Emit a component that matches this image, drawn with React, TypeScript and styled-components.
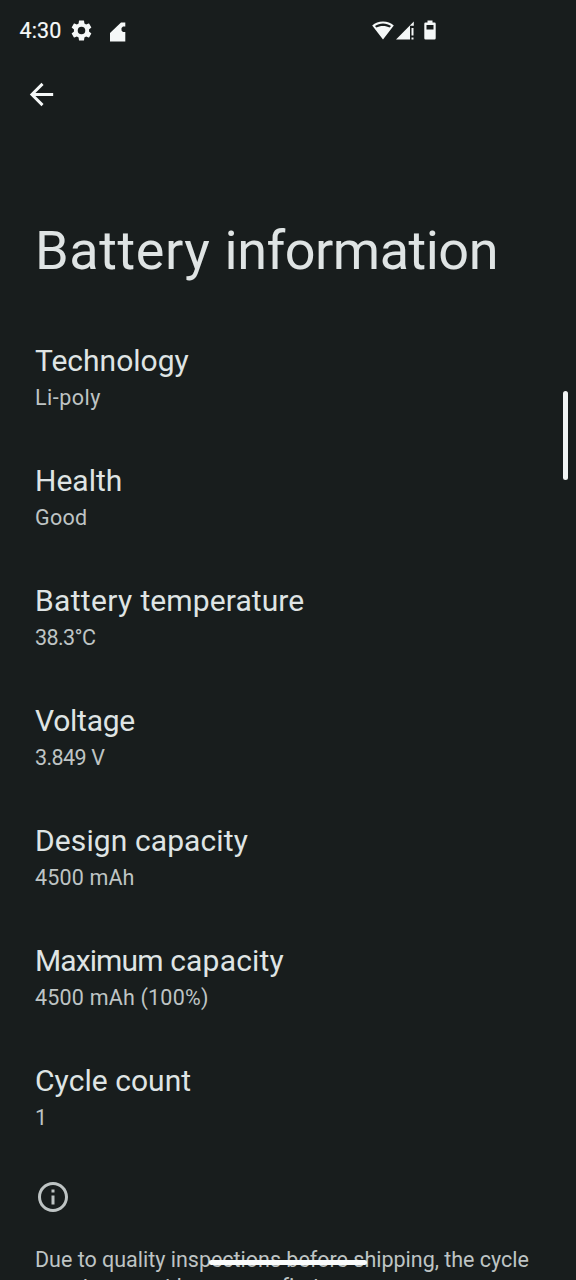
import React from "react";
import styled, { createGlobalStyle } from "styled-components";

const Global = createGlobalStyle`
  html, body { margin: 0; height: 1280px; overflow: hidden; background: #181d1d; }
  body { font-family: Roboto, "Open Sans", sans-serif; }
  * { box-sizing: border-box; }
`;

const Screen = styled.div`
  position: relative;
  display: flex;
  flex-direction: column;
  width: 576px;
  height: 1280px;
  overflow: hidden;
  background: #181d1d;
`;

const StatusBar = styled.header`
  display: flex;
  align-items: center;
  flex: none;
  height: 60px;
  padding: 0 140px 0 19.5px;
  color: #f5f8f8;
`;

const Clock = styled.span`
  width: 51.5px;
  padding-top: 1px;
  font-size: 21.5px;
  line-height: 28px;
  letter-spacing: 0.1px;
  -webkit-text-stroke: 0.2px currentColor;
  white-space: nowrap;
`;

const StatusIcons = styled.div`
  display: flex;
  align-items: center;
  margin-left: auto;
`;

const Toolbar = styled.nav`
  display: flex;
  align-items: center;
  flex: none;
  height: 69px;
  padding-left: 23.5px;
`;

const BackButton = styled.button`
  display: flex;
  padding: 0;
  border: 0;
  background: none;
  color: #f5f8f8;
`;

const Title = styled.h1`
  flex: none;
  margin: 89px 0 0 35px;
  font-size: 54px;
  line-height: 66px;
  font-weight: 400;
  white-space: nowrap;
  color: #dfe4e4;
`;

const List = styled.main`
  flex: none;
  margin-top: 46px;
  padding-left: 35px;
`;

const Row = styled.section`
  height: 120px;
  padding-top: 12px;
`;

const Label = styled.h2`
  margin: 0;
  font-size: 30px;
  line-height: 38px;
  font-weight: 400;
  white-space: nowrap;
  color: #dfe4e4;
`;

const Value = styled.p`
  margin: 4px 0 0;
  font-size: 21.5px;
  line-height: 28px;
  white-space: nowrap;
  color: #bec4c4;
`;

const Track = styled.span<{ $by: number }>`
  letter-spacing: ${(p) => p.$by}px;
`;

const Footer = styled.footer`
  flex: none;
  padding: 9px 0 0 35px;
  color: #bec4c4;
`;

const Note = styled.p`
  width: 510px;
  margin: 31px 0 0;
  font-size: 21.5px;
  line-height: 27px;
  letter-spacing: -0.01px;
`;

const ScrollThumb = styled.div`
  position: absolute;
  top: 391px;
  right: 8px;
  width: 5px;
  height: 89px;
  border-radius: 3px;
  background: #f0f3f3;
`;

const HomeIndicator = styled.div`
  position: absolute;
  bottom: 15px;
  left: 209px;
  width: 158px;
  height: 5px;
  border-radius: 3px;
  background: #fafcfc;
`;

type Run = [text: string, tracking: number];

const rows: { label: Run[]; value: Run[] }[] = [
  { label: [["Technology", 0]], value: [["Li-poly", 0.5]] },
  { label: [["Health", 0]], value: [["Good", 0.25]] },
  { label: [["Battery ", 0.35], ["temperature", 0.1]], value: [["38.3°C", -0.6]] },
  { label: [["Voltage", -0.25]], value: [["3.849", -0.6], [" V", 0]] },
  { label: [["Design capacity", 0.1]], value: [["4500 mAh", 0.15]] },
  { label: [["Maximum", -0.9], [" capacity", 0.2]], value: [["4500 mAh (100%)", 0.2]] },
  { label: [["Cycle count", 0.05]], value: [["1", 0]] },
];

const renderRuns = (runs: Run[]) =>
  runs.map(([text, tracking]) => (
    <Track key={text} $by={tracking}>{text}</Track>
  ));

const GearIcon = () => (
  <svg width="21" height="21" viewBox="2 2 20 20" fill="currentColor">
    <path d="M19.14 12.94c.04-.3.06-.61.06-.94 0-.32-.02-.64-.07-.94l2.03-1.58a.49.49 0 0 0 .12-.61l-1.92-3.32a.488.488 0 0 0-.59-.22l-2.39.96c-.5-.38-1.03-.7-1.62-.94l-.36-2.54a.484.484 0 0 0-.48-.41h-3.84c-.24 0-.43.17-.47.41l-.36 2.54c-.59.24-1.13.57-1.62.94l-2.39-.96c-.22-.08-.47 0-.59.22L2.74 8.87c-.12.21-.08.47.12.61l2.03 1.58c-.05.3-.09.63-.09.94s.02.64.07.94l-2.03 1.58a.49.49 0 0 0-.12.61l1.92 3.32c.12.22.37.29.59.22l2.39-.96c.5.38 1.03.7 1.62.94l.36 2.54c.05.24.24.41.48.41h3.84c.24 0 .44-.17.47-.41l.36-2.54c.59-.24 1.13-.56 1.62-.94l2.39.96c.22.08.47 0 .59-.22l1.92-3.32c.12-.22.07-.47-.12-.61l-2.01-1.58zM12 15.6A3.6 3.6 0 1 1 12 8.4a3.6 3.6 0 0 1 0 7.2z" />
  </svg>
);

const NotchedSvg = styled.svg`
  margin: 4px 0 0 18px;
`;

const NotchedIcon = () => (
  <NotchedSvg width="16" height="20" viewBox="0 0 16 20" fill="currentColor">
    <path d="M0 19.500V11L11 0.500H15.300V4.500H13L11.500 6V8.500L13 10H15.300V19.500Z" />
  </NotchedSvg>
);

const WifiIcon = () => (
  <svg width="22" height="19" viewBox="0 0 22 19" fill="currentColor">
    <path fillRule="evenodd" d="M11 0.5C6.8 0.5 3 2 0.2 4.6L11 18.5L21.8 4.6C19 2 15.200 0.500 11 0.500ZM4.300 6.600L3 4.900C5.300 3.300 8 2.400 11 2.400S16.700 3.300 19 4.900L17.700 6.600C15.800 5.500 13.500 4.900 11 4.900S6.200 5.500 4.300 6.600Z" />
  </svg>
);

const SignalSvg = styled.svg`
  margin-left: 2px;
`;

const SignalIcon = () => (
  <SignalSvg width="19" height="19" viewBox="0 0 19 19" fill="currentColor">
    <path d="M0 18.500L17.800 0.500V4.700H14V18.500Z" />
    <path d="M15.500 7H17.500V14.500H15.500ZM15.500 16.500H17.500V18.500H15.500Z" />
  </SignalSvg>
);

const BatterySvg = styled.svg`
  margin-left: 9.5px;
`;

const BatteryIcon = () => (
  <BatterySvg width="12" height="20" viewBox="0 0 12 20" fill="currentColor">
    <path fillRule="evenodd" d="M3.500 0.500H8.500V2.500H10.500Q11.700 2.500 11.700 3.700V18.300Q11.700 19.500 10.500 19.500H1.500Q0.300 19.500 0.300 18.300V3.700Q0.300 2.500 1.500 2.500H3.500ZM2.500 5V9.500H9.500V5Z" />
  </BatterySvg>
);

const InfoSvg = styled.svg`
  display: block;
`;

const App = () => (
  <>
    <Global />
    <Screen>
      <StatusBar>
        <Clock>4:30</Clock>
        <GearIcon />
        <NotchedIcon />
        <StatusIcons>
          <WifiIcon />
          <SignalIcon />
          <BatteryIcon />
        </StatusIcons>
      </StatusBar>
      <Toolbar>
        <BackButton aria-label="Back">
          <svg width="35" height="35" viewBox="0 0 24 24" fill="currentColor">
            <path d="M20 11H7.830L13.420 5.410L12 4L4 12L12 20L13.410 18.590L7.830 13H20Z" />
          </svg>
        </BackButton>
      </Toolbar>
      <Title>
        <Track $by={0.6}>Battery </Track>
        <Track $by={-0.5}>information</Track>
      </Title>
      <List>
        {rows.map(({ label, value }) => (
          <Row key={label[0][0]}>
            <Label>{renderRuns(label)}</Label>
            <Value>{renderRuns(value)}</Value>
          </Row>
        ))}
      </List>
      <Footer>
        <InfoSvg width="36" height="36" viewBox="0 0 24 24" fill="currentColor">
          <path d="M11 7h2v2h-2zm0 4h2v6h-2zm1-9C6.480 2 2 6.480 2 12s4.480 10 10 10 10-4.480 10-10S17.520 2 12 2zm0 18c-4.410 0-8-3.590-8-8s3.590-8 8-8 8 3.590 8 8-3.590 8-8 8z" />
        </InfoSvg>
        <Note>Due to quality inspections before shipping, the cycle count may not be zero on first use.</Note>
      </Footer>
      <ScrollThumb />
      <HomeIndicator />
    </Screen>
  </>
);

export default App;
